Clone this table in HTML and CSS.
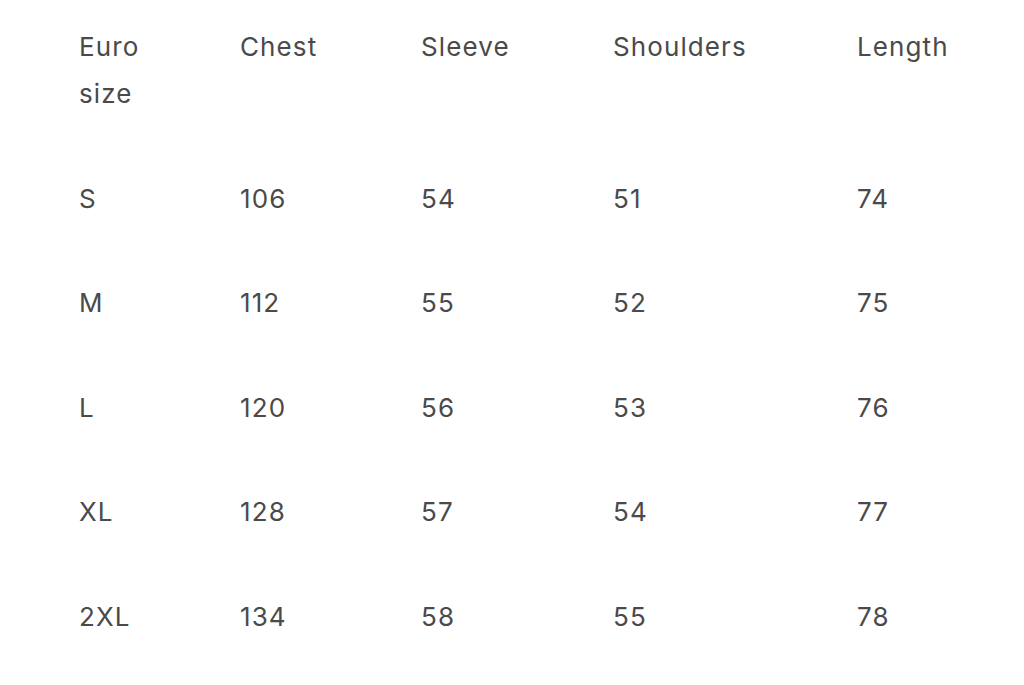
FILE: index.html
```html
<!DOCTYPE html>
<html>
<head>
<meta charset="utf-8">
<link rel="stylesheet" href="styles.css">
</head>
<body>
<table class="size-table">
  <thead>
    <tr>
      <th class="c1">Euro<br>size</th>
      <th class="c2">Chest</th>
      <th class="c3">Sleeve</th>
      <th class="c4">Shoulders</th>
      <th class="c5">Length</th>
    </tr>
  </thead>
  <tbody>
    <tr><td>S</td><td>106</td><td>54</td><td>51</td><td>74</td></tr>
    <tr><td>M</td><td>112</td><td>55</td><td>52</td><td>75</td></tr>
    <tr><td>L</td><td>120</td><td>56</td><td>53</td><td>76</td></tr>
    <tr><td>XL</td><td>128</td><td>57</td><td>54</td><td>77</td></tr>
    <tr><td>2XL</td><td>134</td><td>58</td><td>55</td><td>78</td></tr>
  </tbody>
</table>
</body>
</html>
```
FILE: styles.css
```css
html, body {
  margin: 0;
  padding: 0;
  background: #ffffff;
}
body {
  font-family: "Inter", "Noto Sans", sans-serif;
  color: #4a4a4a;
  font-size: 26px;
  letter-spacing: 1.1px;
}
.size-table {
  border-collapse: collapse;
  margin-left: 79px;
  margin-top: -6px;
  table-layout: fixed;
}
.size-table th,
.size-table td {
  font-weight: 400;
  text-align: left;
  vertical-align: top;
  line-height: 47px;
  padding: 29px 0 28.5px 0;
}
.c1 { width: 161px; }
.c2 { width: 181px; }
.c3 { width: 192px; }
.c4 { width: 244px; }
.c5 { width: 120px; }
```
